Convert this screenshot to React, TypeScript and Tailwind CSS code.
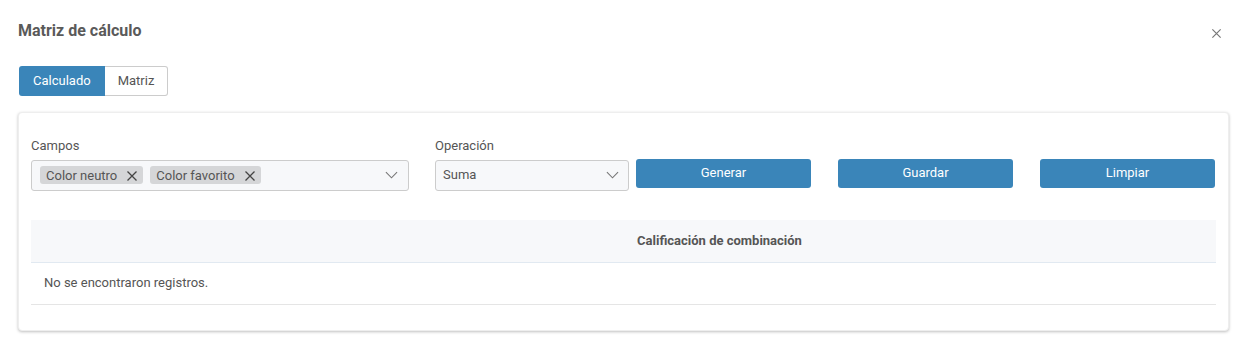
const font = { fontFamily: "Roboto, 'Liberation Sans', sans-serif" };

function XIcon({ className }: { className?: string }) {
  return (
    <svg viewBox="0 0 12 12" className={className} fill="none" stroke="currentColor" strokeWidth="1.3">
      <path d="M1.5 1.5l9 9M10.5 1.5l-9 9" />
    </svg>
  );
}

function Chevron({ className }: { className?: string }) {
  return (
    <svg viewBox="0 0 14 8" className={className} fill="none" stroke="currentColor" strokeWidth="1.2">
      <path d="M1 1l6 6 6-6" />
    </svg>
  );
}

function Chip({ label }: { label: string }) {
  return (
    <span className="flex h-[18px] items-center gap-[9px] rounded-[3px] bg-[#d5d6d8] pl-[6px] pr-[5px] pt-px text-[13px] text-[#555]">
      {label}
      <XIcon className="h-[12px] w-[12px] text-[#444]" />
    </span>
  );
}

export default function App() {
  return (
    <div className="h-[346px] w-[1249px] bg-white text-[#555]" style={font}>
      <div className="flex items-center justify-between pl-[18px] pr-[27px] pt-[19px]">
        <h1 className="text-[16px] font-bold text-[#5a5a5a]">Matriz de cálculo</h1>
        <XIcon className="mt-[4px] h-[11px] w-[11px] text-[#777]" />
      </div>

      <div className="ml-[19px] mt-[23px] flex h-[30px] w-fit text-[13px]">
        <button className="rounded-l-[3px] bg-[#3a85b9] px-[14px] text-white">Calculado</button>
        <button className="rounded-r-[3px] border border-l-0 border-[#ccc] px-[13px] text-[#555]">Matriz</button>
      </div>

      <div className="ml-[18px] mr-[20px] mt-[16px] h-[219px] rounded-[4px] border border-[#eee] bg-white px-[12px] pt-[23px] shadow-[0_1px_3px_rgba(0,0,0,0.25)]">
        <div className="flex items-end">
          <div className="w-[378px]">
            <div className="mb-[4px] text-[13px] text-[#555]">Campos</div>
            <div className="flex h-[31px] items-center justify-between rounded-[3px] border border-[#ccc] bg-[#f7f8fa] pl-[8px] pr-[10px]">
              <div className="flex gap-[7px]">
                <Chip label="Color neutro" />
                <Chip label="Color favorito" />
              </div>
              <Chevron className="h-[8px] w-[13px] text-[#777]" />
            </div>
          </div>

          <div className="ml-[26px] w-[194px]">
            <div className="mb-[4px] text-[13px] text-[#555]">Operación</div>
            <div className="flex h-[31px] items-center justify-between rounded-[3px] border border-[#ccc] bg-[#f7f8fa] pl-[7px] pr-[9px] text-[13px] text-[#555]">
              Suma
              <Chevron className="h-[8px] w-[13px] text-[#777]" />
            </div>
          </div>

          <div className="mb-[3px] ml-[7px] flex gap-[27px]">
            {["Generar", "Guardar", "Limpiar"].map((b) => (
              <button key={b} className="h-[29px] w-[175px] rounded-[3px] bg-[#3a85b9] text-[13px] text-white">
                {b}
              </button>
            ))}
          </div>
        </div>

        <div className="mt-[29px]">
          <div className="grid h-[43px] grid-cols-[192px_1fr] items-center border-b border-[#e1e9f1] bg-[#f7f8fa] text-[13px] font-bold text-[#555]">
            <div />
            <div className="text-center">Calificación de combinación</div>
          </div>
          <div className="flex h-[42px] items-center border-b border-[#e5e5e5] pl-[13px] text-[13px] text-[#555]">
            No se encontraron registros.
          </div>
        </div>
      </div>
    </div>
  );
}
